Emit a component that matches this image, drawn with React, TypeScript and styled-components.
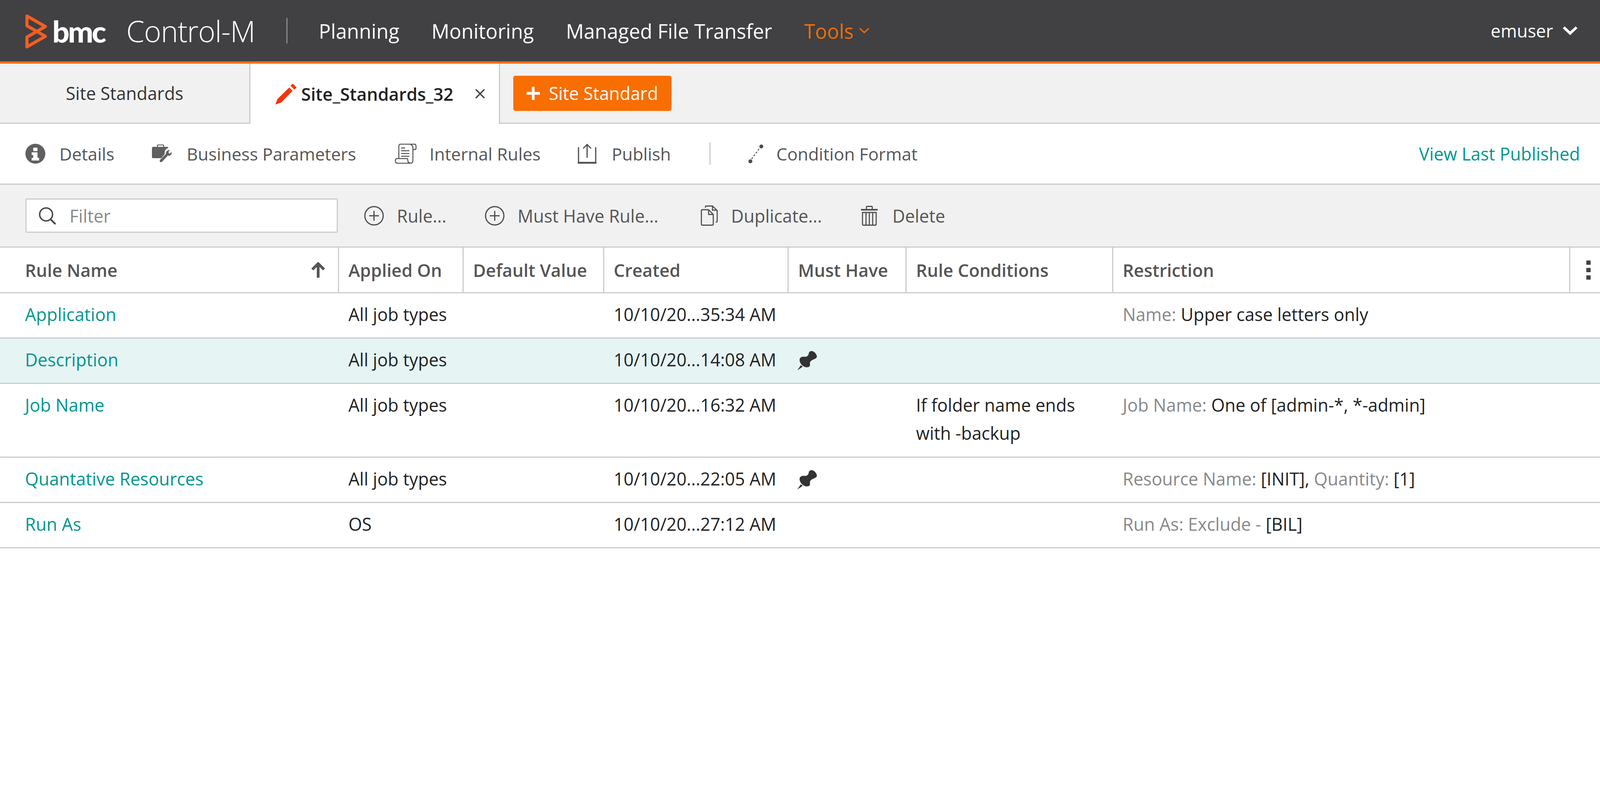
import React from "react";
import styled, { createGlobalStyle } from "styled-components";

const COLUMNS = "868px 319px 360px 472px 302px 529px 1170px 92px";

const GlobalStyle = createGlobalStyle`
    html, body {
        margin: 0;
        background: #fff;
    }
    body {
        font-family: "Open Sans", "Liberation Sans", sans-serif;
        font-size: 44.8px;
        color: #222;
    }
`;

const Page = styled.div`
    width: 4112px;
    height: 2056px;
    overflow: hidden;
    background: #fff;
`;

/* ---------- header ---------- */

const Header = styled.header`
    box-sizing: border-box;
    height: 163px;
    display: flex;
    align-items: center;
    padding: 0 73px 0 65px;
    background: #414042;
    border-bottom: 6px solid #f96e00;
    color: #fff;
`;

const LogoMark = styled.svg`
    display: block;
    margin-top: 4px;
`;

const LogoText = styled.span`
    margin-left: 14px;
    font-family: Lato, sans-serif;
    font-weight: 900;
    font-size: 77px;
    line-height: 80px;
    letter-spacing: -4px;
`;

const Product = styled.span`
    margin-left: 55px;
    font-weight: 300;
    font-size: 75px;
    letter-spacing: -1px;
    line-height: 80px;
`;

const HeaderDivider = styled.span`
    width: 3px;
    height: 65px;
    margin: 0 80px 0 80px;
    background: #8a8a8b;
`;

const MainNav = styled.nav`
    display: flex;
    align-items: center;
    gap: 82px;
`;

const NavLink = styled.a<{ $active?: boolean }>`
    display: flex;
    align-items: center;
    gap: 14px;
    font-size: 51px;
    color: ${({ $active }) => ($active ? "#f96e00" : "#fff")};
`;

const UserMenu = styled.div`
    margin-left: auto;
    display: flex;
    align-items: center;
    gap: 24px;
    font-size: 45px;
`;

/* ---------- tabs ---------- */

const TabBar = styled.div`
    box-sizing: border-box;
    height: 154px;
    display: flex;
    align-items: center;
    background: #f1f1f1;
    border-bottom: 3px solid #ccc;
`;

const ListTab = styled.div`
    box-sizing: border-box;
    width: 641px;
    height: 100%;
    display: flex;
    align-items: center;
    justify-content: center;
    border-right: 3px solid #ccc;
    color: #333;
`;

const EditTab = styled.div`
    box-sizing: border-box;
    width: 639px;
    height: calc(100% + 3px);
    margin-bottom: -3px;
    display: flex;
    align-items: center;
    padding-left: 62px;
    background: #fff;
    border-right: 3px solid #ccc;
    color: #222;
`;

const TabName = styled.span`
    margin-left: 10px;
    font-weight: 600;
`;

const TabClose = styled.span`
    display: flex;
    margin-left: 55px;
`;

const AddButton = styled.button`
    box-sizing: border-box;
    width: 405px;
    height: 90px;
    margin-left: 34px;
    display: flex;
    align-items: center;
    gap: 23px;
    padding: 0 0 0 34px;
    background: #f96e00;
    border: 0;
    border-radius: 5px;
    font: inherit;
    color: #fff;
`;

/* ---------- action bars ---------- */

const ActionBar = styled.div`
    box-sizing: border-box;
    height: 156px;
    display: flex;
    align-items: center;
    padding: 0 67px 0 65px;
    background: #fff;
    border-bottom: 3px solid #ccc;
    font-size: 44.3px;
`;

const ActionItem = styled.div<{ $gap: number; $lead?: number }>`
    display: flex;
    align-items: center;
    gap: ${({ $gap }) => $gap}px;
    margin-left: ${({ $lead = 0 }) => $lead}px;
    color: #555;
`;

const ActionDivider = styled.span`
    width: 3px;
    height: 57px;
    margin: 0 96px 0 98px;
    background: #ccc;
`;

const PublishedLink = styled.a`
    margin-left: auto;
    font-size: 44.8px;
    color: #00968f;
`;

const FilterBar = styled.div`
    box-sizing: border-box;
    height: 161px;
    display: flex;
    align-items: center;
    padding-left: 65px;
    background: #f1f1f1;
    border-bottom: 3px solid #ccc;
`;

const FilterBox = styled.div`
    box-sizing: border-box;
    width: 800px;
    height: 88px;
    margin-right: 67px;
    display: flex;
    align-items: center;
    gap: 34px;
    padding-left: 31px;
    background: #fff;
    border: 3px solid #ccc;
    border-radius: 4px;
    color: #888;
`;

/* ---------- table ---------- */

const Row = styled.div<{ $selected?: boolean; $height: number }>`
    box-sizing: border-box;
    height: ${({ $height }) => $height}px;
    display: grid;
    grid-template-columns: ${COLUMNS};
    background: ${({ $selected }) => ($selected ? "#e6f4f4" : "#fff")};
    border-bottom: 3px solid #ccc;
`;

const HeadCell = styled.div`
    box-sizing: border-box;
    display: flex;
    align-items: center;
    justify-content: space-between;
    padding: 0 31px 0 24px;
    border-right: 3px solid #ccc;
    font-weight: 600;
    color: #555;

    &:first-child {
        padding-left: 64px;
    }
    &:last-child {
        padding: 0;
        border-right: 0;
    }
`;

const Cell = styled.div`
    padding: 18px 24px 0;
    line-height: 72px;
    color: #222;

    &:first-child {
        padding-left: 64px;
    }
`;

const NoWrap = styled.span`
    white-space: nowrap;
`;

const RuleLink = styled.a`
    color: #00968f;
`;

const Muted = styled.span`
    color: #888;
`;

const PinSlot = styled.div`
    margin-top: 11px;
    margin-left: -3px;
`;

const Kebab = styled.span`
    display: flex;
    flex-direction: column;
    gap: 8px;
    margin: 0 auto;

    i {
        display: block;
        width: 11px;
        height: 11px;
        background: #444;
    }
`;

/* ---------- icons ---------- */

const Logo = () => (
    <LogoMark width="55" height="87" viewBox="0 0 55 87" fill="none">
        <path
            d="M4 4 L51 31 L4 58 L4 83 L51 56 L4 29 Z"
            stroke="#f15f22"
            strokeWidth="8"
            strokeLinejoin="round"
        />
    </LogoMark>
);

const Chevron = ({ size, width }: { size: number; width: number }) => (
    <svg width={size} height={size * 0.62} viewBox="0 0 40 25" fill="none">
        <path d="M3 4 L20 20 L37 4" stroke="currentColor" strokeWidth={width} />
    </svg>
);

const Pencil = () => (
    <svg width="58" height="57" viewBox="125 35 165 160" fill="#f5330c">
        <path d="M130 192 L146 152 L232 68 L256 92 L172 178 Z" />
        <path d="M241 54 L258 40 L285 68 L268 84 Z" />
    </svg>
);

const CloseIcon = () => (
    <svg width="26" height="26" viewBox="0 0 26 26" stroke="#444" strokeWidth="3.5">
        <path d="M2 2 L24 24 M24 2 L2 24" />
    </svg>
);

const PlusIcon = () => (
    <svg width="34" height="34" viewBox="0 0 34 34" stroke="#fff" strokeWidth="7">
        <path d="M17 0 V34 M0 17 H34" />
    </svg>
);

const InfoIcon = () => (
    <svg width="51" height="51" viewBox="0 0 51 51">
        <circle cx="25.5" cy="25.5" r="25.5" fill="#606060" />
        <rect x="20" y="10" width="11" height="9" rx="2" fill="#fff" />
        <path d="M16 22 H31 V36 H35 V43 H16 V36 H20 V29 H16 Z" fill="#fff" />
    </svg>
);

const BriefcaseIcon = () => (
    <svg width="52" height="48" viewBox="0 0 52 48">
        <path
            d="M14 6 V2.5 Q14 1 16 1 H28 Q30 1 30 2.5 V6"
            fill="none"
            stroke="#606060"
            strokeWidth="2.5"
        />
        <path
            d="M3 6 H40 L42 9 Q35 11 33 17 Q32 21 33 24 L24 35 H3 Q0 35 0 32 V9 Q0 6 3 6 Z"
            fill="#606060"
        />
        <path
            d="M39 16 L46 13 L42 20 L45 24 L50 19 Q52 26 45 29 L41 28 L26 44 Q22 47 20 43 Q19 41 21 39 L36 24 Q35 19 39 16 Z"
            fill="#606060"
        />
    </svg>
);

const ScrollIcon = () => (
    <svg width="57" height="51" viewBox="0 0 55 51" fill="none" stroke="#4d4d4d" strokeWidth="2.4">
        <path d="M10 38 V6 Q10 1 15 1 H50 Q54 1 54 7 V12 Q54 15 50 15 H46" />
        <path d="M46 15 V43 Q46 50 40 50 H34" />
        <path d="M40 2 Q46 4 46 10 V15" />
        <path d="M6 38 H31 Q33 38 33 42 Q33 50 41 50 H8 Q1 50 1 44 Q1 38 6 38 Z" />
        <path d="M16 11 H26 M16 18 H37 M16 25 H37 M16 32 H37" strokeWidth="2.6" />
    </svg>
);

const PublishIcon = () => (
    <svg width="48" height="51" viewBox="0 0 48 51" fill="none" stroke="#4d4d4d" strokeWidth="3">
        <path d="M2 9 V48 H46 V9" />
        <path d="M0 49 H48" strokeWidth="4" />
        <path d="M24 36 V2 M14 12 L24 2 L34 12" />
    </svg>
);

const ConditionIcon = () => (
    <svg width="40" height="50" viewBox="0 0 40 50" fill="#4d4d4d">
        <circle cx="6" cy="44" r="5" />
        <circle cx="34" cy="6" r="5" />
        <path d="M9 38 L30 10" stroke="#4d4d4d" strokeWidth="2.4" strokeDasharray="5 4" />
    </svg>
);

const SearchIcon = () => (
    <svg width="45" height="45" viewBox="0 0 45 45" fill="none" stroke="#444" strokeWidth="3.6">
        <circle cx="19" cy="19" r="16.5" />
        <path d="M30 31 L43 44" strokeWidth="4.4" />
    </svg>
);

const AddCircleIcon = () => (
    <svg width="51" height="51" viewBox="0 0 51 51" fill="none" stroke="#4d4d4d" strokeWidth="3">
        <circle cx="25.5" cy="25.5" r="23.5" />
        <path d="M25.5 13 V38 M13 25.5 H38" />
    </svg>
);

const CopyIcon = () => (
    <svg width="44" height="52" viewBox="0 0 44 52" fill="none" stroke="#4d4d4d" strokeWidth="2.8">
        <path d="M12 6 V3 Q12 1.5 14 1.5 H30 L42 13 V41 Q42 42 38 43" />
        <path d="M30 2 V12 H41" />
        <path d="M4 11 H20 L32 23 V48 Q32 50.5 29 50.5 H4 Q1.5 50.5 1.5 48 V13.5 Q1.5 11 4 11 Z" />
        <path d="M20 11 V23 H32" />
    </svg>
);

const TrashIcon = () => (
    <svg width="43" height="51" viewBox="0 0 43 51" fill="none" stroke="#4d4d4d" strokeWidth="2.8">
        <path d="M0 10 H43" strokeWidth="4" />
        <path d="M14 9 V3 Q14 1.5 16 1.5 H27 Q29 1.5 29 3 V9" />
        <path d="M4 17 H39 V47 Q39 49.5 36 49.5 H7 Q4 49.5 4 47 Z" />
        <path d="M13 18 V49 M21.5 18 V49 M30 18 V49" />
    </svg>
);

const PinIcon = () => (
    <svg width="53" height="53" viewBox="95 50 160 160" fill="#333">
        <path d="M196 62 C215 50 240 70 248 92 C256 112 236 118 222 124 C210 130 196 138 196 150 C196 170 200 178 180 183 C150 190 118 160 116 130 C114 108 135 100 155 103 C170 104 178 98 184 88 C188 78 186 68 196 62 Z" />
        <path d="M126 168 L140 180 L98 208 Z" />
    </svg>
);

const SortArrow = () => (
    <svg width="39" height="40" viewBox="0 0 36 40" fill="none" stroke="#555" strokeWidth="7">
        <path d="M18 40 V5 M3 19 L18 4 L33 19" />
    </svg>
);

/* ---------- data ---------- */

type Rule = {
    name: string;
    appliedOn: string;
    created: string;
    mustHave?: boolean;
    conditions?: React.ReactNode;
    restriction?: React.ReactNode;
    height: number;
    selected?: boolean;
};

const headings = [
    "Rule Name",
    "Applied On",
    "Default Value",
    "Created",
    "Must Have",
    "Rule Conditions",
    "Restriction",
];

const rules: Rule[] = [
    {
        name: "Application",
        appliedOn: "All job types",
        created: "10/10/20...35:34 AM",
        height: 116,
        restriction: (
            <>
                <Muted>Name:</Muted> Upper case letters only
            </>
        ),
    },
    {
        name: "Description",
        appliedOn: "All job types",
        created: "10/10/20...14:08 AM",
        height: 116,
        mustHave: true,
        selected: true,
    },
    {
        name: "Job Name",
        appliedOn: "All job types",
        created: "10/10/20...16:32 AM",
        height: 189,
        conditions: "If folder name ends with -backup",
        restriction: (
            <>
                <Muted>Job Name:</Muted> One of [admin-*, *-admin]
            </>
        ),
    },
    {
        name: "Quantative Resources",
        appliedOn: "All job types",
        created: "10/10/20...22:05 AM",
        height: 116,
        mustHave: true,
        restriction: (
            <>
                <Muted>Resource Name:</Muted> [INIT], <Muted>Quantity:</Muted> [1]
            </>
        ),
    },
    {
        name: "Run As",
        appliedOn: "OS",
        created: "10/10/20...27:12 AM",
        height: 116,
        restriction: (
            <>
                <Muted>Run As: Exclude -</Muted> [BIL]
            </>
        ),
    },
];

export default function App() {
    return (
        <Page>
            <GlobalStyle />
            <Header>
                <Logo />
                <LogoText>bmc</LogoText>
                <Product>Control-M</Product>
                <HeaderDivider />
                <MainNav>
                    <NavLink>Planning</NavLink>
                    <NavLink>Monitoring</NavLink>
                    <NavLink>Managed File Transfer</NavLink>
                    <NavLink $active>
                        Tools
                        <Chevron size={27} width={5} />
                    </NavLink>
                </MainNav>
                <UserMenu>
                    emuser
                    <Chevron size={39} width={7} />
                </UserMenu>
            </Header>

            <TabBar>
                <ListTab>Site Standards</ListTab>
                <EditTab>
                    <Pencil />
                    <TabName>Site_Standards_32</TabName>
                    <TabClose>
                        <CloseIcon />
                    </TabClose>
                </EditTab>
                <AddButton>
                    <PlusIcon />
                    Site Standard
                </AddButton>
            </TabBar>

            <ActionBar>
                <ActionItem $gap={36}>
                    <InfoIcon />
                    Details
                </ActionItem>
                <ActionItem $gap={37} $lead={96}>
                    <BriefcaseIcon />
                    Business Parameters
                </ActionItem>
                <ActionItem $gap={33} $lead={98}>
                    <ScrollIcon />
                    Internal Rules
                </ActionItem>
                <ActionItem $gap={39} $lead={95}>
                    <PublishIcon />
                    Publish
                </ActionItem>
                <ActionDivider />
                <ActionItem $gap={33}>
                    <ConditionIcon />
                    Condition Format
                </ActionItem>
                <PublishedLink>View Last Published</PublishedLink>
            </ActionBar>

            <FilterBar>
                <FilterBox>
                    <SearchIcon />
                    Filter
                </FilterBox>
                <ActionItem $gap={33}>
                    <AddCircleIcon />
                    Rule...
                </ActionItem>
                <ActionItem $gap={33} $lead={98}>
                    <AddCircleIcon />
                    Must Have Rule...
                </ActionItem>
                <ActionItem $gap={34} $lead={108}>
                    <CopyIcon />
                    Duplicate...
                </ActionItem>
                <ActionItem $gap={37} $lead={100}>
                    <TrashIcon />
                    Delete
                </ActionItem>
            </FilterBar>

            <Row $height={117}>
                {headings.map((heading, index) => (
                    <HeadCell key={heading}>
                        {heading}
                        {index === 0 && <SortArrow />}
                    </HeadCell>
                ))}
                <HeadCell>
                    <Kebab>
                        <i />
                        <i />
                        <i />
                    </Kebab>
                </HeadCell>
            </Row>

            {rules.map((rule) => (
                <Row key={rule.name} $selected={rule.selected} $height={rule.height}>
                    <Cell>
                        <RuleLink>{rule.name}</RuleLink>
                    </Cell>
                    <Cell>{rule.appliedOn}</Cell>
                    <Cell />
                    <Cell>
                        <NoWrap>{rule.created}</NoWrap>
                    </Cell>
                    <Cell>
                        {rule.mustHave && (
                            <PinSlot>
                                <PinIcon />
                            </PinSlot>
                        )}
                    </Cell>
                    <Cell>{rule.conditions}</Cell>
                    <Cell>{rule.restriction}</Cell>
                    <Cell />
                </Row>
            ))}
        </Page>
    );
}
